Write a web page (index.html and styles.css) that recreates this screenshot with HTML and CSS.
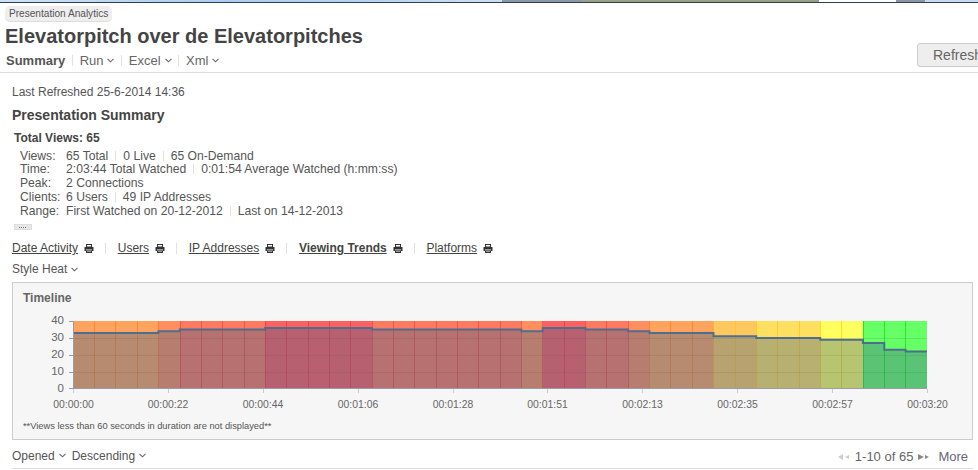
FILE: index.html
```html
<!DOCTYPE html>
<html lang="en">
<head>
<meta charset="utf-8">
<title>Presentation Analytics</title>
<link rel="stylesheet" href="styles.css">
</head>
<body>
<svg class="defs" width="0" height="0" aria-hidden="true">
  <symbol id="chev" viewBox="0 0 7 5"><path d="M.5 .8 3.5 3.8 6.5 .8" fill="none" stroke="currentColor" stroke-width="1.1"/></symbol>
  <symbol id="printer" viewBox="0 0 10 9"><path d="M2 0H8V3H2Z M3 1V2.5H7V1Z" fill="#333" fill-rule="evenodd"/><path d="M0.5 3H9.5V7H8V5.5H2V7H.5Z" fill="#333"/><path d="M2 6.3H8V9H2Z" fill="#333"/><path d="M3 7H7V7.6H3Z" fill="#ddd"/></symbol>
</svg>
<div class="strip">
  <span class="seg seg-sky"></span>
  <span class="seg seg-slate"></span>
  <span class="seg seg-olive"></span>
  <span class="seg seg-white"></span>
  <span class="seg seg-gray"></span>
  <span class="seg seg-light"></span>
</div>
<header class="head">
  <div class="head-main">
    <span class="tag">Presentation Analytics</span>
    <h1 class="title">Elevatorpitch over de Elevatorpitches</h1>
    <nav class="nav">
      <b class="nav-current">Summary</b><i class="sep"></i>
      <span>Run</span><svg class="chev"><use href="#chev"/></svg><i class="sep"></i>
      <span>Excel</span><svg class="chev"><use href="#chev"/></svg><i class="sep"></i>
      <span>Xml</span><svg class="chev"><use href="#chev"/></svg>
    </nav>
  </div>
  <button class="refresh" type="button">Refresh</button>
</header>
<main class="content">
  <p class="refreshed">Last Refreshed 25-6-2014 14:36</p>
  <h2 class="section">Presentation Summary</h2>
  <h3 class="total">Total Views: 65</h3>
  <div class="stats">
    <span>Views:</span><span>65 Total<i class="sep"></i>0 Live<i class="sep"></i>65 On-Demand</span>
    <span>Time:</span><span>2:03:44 Total Watched<i class="sep"></i>0:01:54 Average Watched (h:mm:ss)</span>
    <span>Peak:</span><span>2 Connections</span>
    <span>Clients:</span><span>6 Users<i class="sep"></i>49 IP Addresses</span>
    <span>Range:</span><span>First Watched on 20-12-2012<i class="sep"></i>Last on 14-12-2013</span>
  </div>
  <div class="more-btn"><span class="more-dots"></span></div>
  <div class="tabs">
    <a class="tab">Date Activity</a><svg class="printer"><use href="#printer"/></svg><i class="sep tab-sep"></i>
    <a class="tab">Users</a><svg class="printer"><use href="#printer"/></svg><i class="sep tab-sep"></i>
    <a class="tab">IP Addresses</a><svg class="printer"><use href="#printer"/></svg><i class="sep tab-sep"></i>
    <a class="tab tab-on">Viewing Trends</a><svg class="printer"><use href="#printer"/></svg><i class="sep tab-sep"></i>
    <a class="tab">Platforms</a><svg class="printer"><use href="#printer"/></svg>
  </div>
  <div class="style-row">Style Heat<svg class="chev"><use href="#chev"/></svg></div>
  <section class="panel">
    <h4 class="panel-title">Timeline</h4>
    <svg class="chart" viewBox="13 312 959 100" width="959" height="100" role="img" aria-label="Timeline chart">
      <g shape-rendering="crispEdges">
        <rect x="73" y="321" width="85.4" height="67.7" fill="#ffa35f"/>
        <rect x="158.4" y="321" width="21.35" height="67.7" fill="#ff8f5f"/>
        <rect x="179.75" y="321" width="85.4" height="67.7" fill="#ff7a5f"/>
        <rect x="265.15" y="321" width="106.75" height="67.7" fill="#ff6060"/>
        <rect x="371.9" y="321" width="149.45" height="67.7" fill="#ff7a5f"/>
        <rect x="521.35" y="321" width="21.35" height="67.7" fill="#ff8f5f"/>
        <rect x="542.7" y="321" width="42.7" height="67.7" fill="#ff6060"/>
        <rect x="585.4" y="321" width="42.7" height="67.7" fill="#ff7a5f"/>
        <rect x="628.1" y="321" width="21.35" height="67.7" fill="#ff8f5f"/>
        <rect x="649.45" y="321" width="64.05" height="67.7" fill="#ffa35f"/>
        <rect x="713.5" y="321" width="42.7" height="67.7" fill="#ffc85f"/>
        <rect x="756.2" y="321" width="64.05" height="67.7" fill="#ffdf5f"/>
        <rect x="820.25" y="321" width="42.7" height="67.7" fill="#ffff60"/>
        <rect x="862.95" y="321" width="64.05" height="67.7" fill="#66ff66"/>
      </g>
      <g class="dividers">
        <path class="div-orange" d="M94.5 321V389M115.5 321V389M137.5 321V389M158.5 321V389M649.5 321V389M670.5 321V389M692.5 321V389"/>
        <path class="div-red" d="M180.5 321V389M201.5 321V389M222.5 321V389M244.5 321V389M265.5 321V389M286.5 321V389M308.5 321V389M329.5 321V389M350.5 321V389M372.5 321V389M393.5 321V389M414.5 321V389M436.5 321V389M457.5 321V389M478.5 321V389M500.5 321V389M521.5 321V389M542.5 321V389M564.5 321V389M585.5 321V389M606.5 321V389M628.5 321V389"/>
        <path class="div-yellow" d="M713.5 321V389M735.5 321V389M756.5 321V389M777.5 321V389M799.5 321V389M820.5 321V389M841.5 321V389"/>
        <path class="div-green" d="M863.5 321V389M884.5 321V389M905.5 321V389"/>
      </g>
      <path class="grid" d="M73 338.5H927M73 355.5H927M73 372.5H927"/>
      <path class="area" d="M73 388.7V332.9H158.4V331.2H179.75V329.6H265.15V327.9H371.9V329.6H521.35V331.2H542.7V327.9H585.4V329.6H628.1V331.2H649.45V332.9H713.5V336.3H756.2V338H820.25V339.7H862.95V343H884.3V349.8H905.65V351.5H927V388.7Z"/>
      <path class="line" d="M73 332.9H158.4V331.2H179.75V329.6H265.15V327.9H371.9V329.6H521.35V331.2H542.7V327.9H585.4V329.6H628.1V331.2H649.45V332.9H713.5V336.3H756.2V338H820.25V339.7H862.95V343H884.3V349.8H905.65V351.5H927"/>
      <path class="axis" d="M73.5 321V389M69 321.5H73M69 338.5H73M69 355.5H73M69 372.5H73M69 388.5H927"/>
      <path class="ticks" d="M73.5 389V393M168.5 389V393M263.5 389V393M358.5 389V393M453.5 389V393M547.5 389V393M642.5 389V393M737.5 389V393M832.5 389V393M927.5 389V393"/>
      <g class="ylabels">
        <text x="64" y="324">40</text>
        <text x="64" y="341">30</text>
        <text x="64" y="358">20</text>
        <text x="64" y="375">10</text>
        <text x="64" y="392">0</text>
      </g>
      <g class="xlabels">
        <text x="73.5" y="408">00:00:00</text>
        <text x="168" y="408">00:00:22</text>
        <text x="263" y="408">00:00:44</text>
        <text x="358" y="408">00:01:06</text>
        <text x="453" y="408">00:01:28</text>
        <text x="547.5" y="408">00:01:51</text>
        <text x="642.5" y="408">00:02:13</text>
        <text x="737.5" y="408">00:02:35</text>
        <text x="832.5" y="408">00:02:57</text>
        <text x="927.5" y="408">00:03:20</text>
      </g>
    </svg>
    <p class="note">**Views less than 60 seconds in duration are not displayed**</p>
  </section>
  <div class="list-bar">
    <span>Opened</span><svg class="chev"><use href="#chev"/></svg>
    <span class="sort">Descending</span><svg class="chev"><use href="#chev"/></svg>
    <div class="pager">
      <svg class="pg-icon pg-off" viewBox="0 0 12 6"><path d="M5 0V6L0 3Z M11 1V5L7 3Z"/></svg>
      <span>1-10 of 65</span>
      <svg class="pg-icon pg-on" viewBox="0 0 12 6"><path d="M0 0V6L6 3Z M7 1V5L11 3Z"/></svg>
      <span class="pg-more">More</span>
    </div>
  </div>
</main>
</body>
</html>
```
FILE: styles.css
```css
* { box-sizing: border-box; }
html, body { margin: 0; padding: 0; height: 470px; overflow: hidden; background: #fff; }
body { font-family: "Liberation Sans", Arial, sans-serif; font-size: 12px; color: #555; }
.defs { position: absolute; }
.strip { display: flex; height: 3px; background: #2f3f4f; padding-bottom: 1px; }
.seg { display: block; height: 2px; }
.seg-sky { width: 502px; background: linear-gradient(90deg, #cfe3f7, #a9cdf2 45%, #b5d5f5 75%, #cfe0f4); }
.seg-slate { width: 79px; background: #8a99a8; }
.seg-olive { width: 238px; background: #99a083; }
.seg-white { width: 77px; background: #fff; }
.seg-gray { width: 29px; background: #8c97a6; }
.seg-light { flex: 1; background: #c4dcf5; }

.head { display: flex; justify-content: space-between; height: 70px; border-bottom: 1px solid #ddd; padding-left: 5px; }
.head-main { display: flex; flex-direction: column; align-items: flex-start; padding-top: 3px; }
.tag { display: block; height: 16px; line-height: 15px; padding: 0 4px; font-size: 10.1px; background: #eee; border-radius: 5px; border-bottom: 1px solid #ddd; color: #555; }
.title { margin: 2px 0 0; font-size: 20px; line-height: 24px; font-weight: bold; color: #444; }
.nav { display: flex; align-items: center; height: 17px; margin-top: 4px; padding-left: 1px; font-size: 13px; color: #666; }
.nav-current { color: #555; }
.sep { display: inline-block; width: 1px; height: 11px; background: #e3dfdc; margin: 0 6.7px; vertical-align: -1px; }
.chev { display: inline-block; width: 7px; height: 5px; margin-left: 4px; color: #666; }
.refresh { flex: none; width: 90px; height: 24px; margin: 40px -29px 0 0; padding: 0 0 0 15px; border: 1px solid #ccc; border-radius: 3px; background: #eee; font: 14px "Liberation Sans", Arial, sans-serif; color: #666; text-align: left; }

.content { padding: 0 5px 0 12px; }
.refreshed { margin: 0; padding-top: 12px; height: 27px; line-height: 14px; }
.section { margin: 7px 0 0; font-size: 14px; line-height: 16px; font-weight: bold; color: #444; }
.total { margin: 8px 0 0 2px; font-size: 12px; line-height: 14px; font-weight: bold; color: #444; }
.stats { display: grid; grid-template-columns: 46px auto; grid-template-rows: 13px; justify-content: start; grid-auto-rows: 14px; margin: 4px 0 0 8px; line-height: 14px; font-size: 12.15px; }
.stats .sep { height: 10px; margin: 0 7px; }
.more-btn { display: flex; align-items: center; justify-content: center; width: 18px; height: 6px; margin: 6px 0 0 2px; background: #e6e6e6; border: 1px solid #ddd; }
.more-dots { width: 8px; height: 1px; background: repeating-linear-gradient(90deg, #777 0 1px, transparent 1px 2px); }
.tabs { display: flex; align-items: center; height: 16px; margin-top: 10px; line-height: 16px; }
.tab { color: #444; text-decoration: underline; }
.tab-on { font-weight: bold; }
.printer { width: 10px; height: 9px; margin-left: 6px; }
.tab-sep { height: 11px; margin: 0 11.7px 0 11px; }
.style-row { display: flex; align-items: center; height: 16px; margin-top: 5px; }
.panel { width: 961px; height: 158px; margin-top: 5px; background: #f6f6f6; border: 1px solid #ccc; }
.panel-title { margin: 0; padding: 8px 0 0 10px; height: 29px; font-size: 12px; line-height: 14px; font-weight: bold; color: #666; }
.chart { display: block; }
.note { margin: 0; padding: 9px 0 0 10px; font-size: 9.3px; line-height: 11px; color: #555; }
.chart text { font-family: "Liberation Sans", Arial, sans-serif; fill: #666; }
.ylabels text { font-size: 11.5px; text-anchor: end; }
.xlabels text { font-size: 10.4px; text-anchor: middle; }
.grid { stroke: rgba(0, 0, 0, .09); stroke-width: 1; fill: none; }
.area { fill: rgba(65, 100, 140, .38); }
.line { fill: none; stroke: #4f6d8e; stroke-width: 2; }
.axis { stroke: #9a9aa8; stroke-width: 1; fill: none; }
.ticks { stroke: #ccc; stroke-width: 1; fill: none; }
.dividers path { fill: none; stroke-width: 1; }
.div-orange { stroke: rgba(255, 110, 20, .55); }
.div-red { stroke: rgba(225, 25, 35, .4); }
.div-yellow { stroke: rgba(255, 190, 20, .6); }
.div-green { stroke: rgba(0, 215, 0, .6); }
.list-bar { display: flex; align-items: center; width: 961px; height: 29px; padding-top: 3px; border-bottom: 1px solid #ddd; }
.sort { margin-left: 6px; }
.pager { display: flex; align-items: center; margin-left: auto; padding: 2px 5px 0 0; font-size: 13px; color: #666; }
.pg-icon { width: 12px; height: 6px; }
.pg-off { fill: #ccc; margin-right: 5px; }
.pg-on { fill: #888; margin: 0 8px 0 5px; }
.pg-more { color: #667; }
```
